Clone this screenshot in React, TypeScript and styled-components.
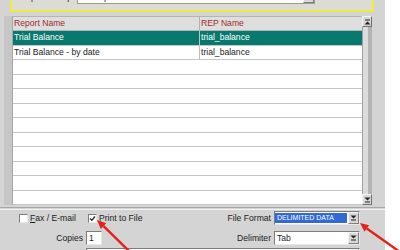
import React from 'react';
import styled, { createGlobalStyle } from 'styled-components';

const GlobalStyle = createGlobalStyle`
  html, body {
    margin: 0;
    padding: 0;
    background: #ffffff;
  }
  body {
    font-family: 'Liberation Sans', Arial, sans-serif;
    font-size: 8.6px;
    color: #1c1c1c;
  }
`;

const rows = [
  { name: 'Trial Balance', rep: 'trial_balance', selected: true },
  { name: 'Trial Balance - by date', rep: 'trial_balance', selected: false },
];
const EMPTY_ROWS = 10;

const DownGlyph: React.FC = () => (
  <svg width="7" height="6" viewBox="0 0 7 6">
    <path d="M0.5 0.5 H6.5 L3.5 3.5 Z" fill="#222" />
    <rect x="1" y="4.5" width="5" height="1" fill="#222" />
  </svg>
);

const UpGlyph: React.FC = () => (
  <svg width="7" height="6" viewBox="0 0 7 6">
    <rect x="1" y="0.5" width="5" height="1" fill="#222" />
    <path d="M0.5 5.5 H6.5 L3.5 2.5 Z" fill="#222" />
  </svg>
);

const CheckMark: React.FC = () => (
  <svg width="7" height="7" viewBox="0 0 7 7">
    <path d="M1 3.5 L2.8 5.3 L6 1.5" stroke="#222" strokeWidth="1.3" fill="none" />
  </svg>
);

const App: React.FC = () => {
  return (
    <Page>
      <GlobalStyle />
      <Window>
        <GroupBox>
          <GroupLabel>Report Group</GroupLabel>
          <GroupInput>
            <span>All Reports</span>
            <SmallButton>
              <DownGlyph />
            </SmallButton>
          </GroupInput>
        </GroupBox>

        <GridArea>
          <Gutter />
          <Table>
            <HeaderRow>
              <HeadCell $divider>Report Name</HeadCell>
              <HeadCell>REP Name</HeadCell>
            </HeaderRow>
            {rows.map((r) => (
              <Row key={r.name} $selected={r.selected}>
                <Cell $divider>{r.name}</Cell>
                <Cell>{r.rep}</Cell>
              </Row>
            ))}
            {Array.from({ length: EMPTY_ROWS }).map((_, i) => (
              <Row key={i} />
            ))}
          </Table>
          <ScrollBar>
            <ScrollButton>
              <UpGlyph />
            </ScrollButton>
            <Track />
            <ScrollButton>
              <DownGlyph />
            </ScrollButton>
          </ScrollBar>
        </GridArea>

        <Separator />

        <Options>
          <OptionRow>
            <CheckGroup $width={69}>
              <CheckBox />
              <CheckText>
                <u>F</u>ax / E-mail
              </CheckText>
            </CheckGroup>
            <CheckGroup>
              <CheckBox>
                <CheckMark />
              </CheckBox>
              <CheckText>Print to File</CheckText>
            </CheckGroup>
            <Field>
              <FieldLabel>File Format</FieldLabel>
              <Select>
                <SelectValue $highlight>DELIMITED DATA</SelectValue>
                <SmallButton>
                  <DownGlyph />
                </SmallButton>
              </Select>
            </Field>
          </OptionRow>

          <OptionRow $gap={6}>
            <CopiesLabel>Copies</CopiesLabel>
            <CopiesInput>1</CopiesInput>
            <Field>
              <FieldLabel>Delimiter</FieldLabel>
              <Select>
                <SelectValue>Tab</SelectValue>
                <SmallButton>
                  <DownGlyph />
                </SmallButton>
              </Select>
            </Field>
          </OptionRow>

          <OptionRow $gap={3}>
            <WideInput>
              <SmallButton />
            </WideInput>
          </OptionRow>
        </Options>
      </Window>

      <Arrows width="400" height="250" viewBox="0 0 400 250">
        <line x1="131" y1="253" x2="103.6" y2="226.2" stroke="#e2231a" strokeWidth="2.4" />
        <polygon points="97,220 106.3,223.2 100.8,229.1" fill="#e2231a" />
        <line x1="400" y1="252" x2="366.8" y2="228.5" stroke="#e2231a" strokeWidth="2.4" />
        <polygon points="360,223 369.1,225.2 364.5,231.7" fill="#e2231a" />
      </Arrows>
    </Page>
  );
};

export default App;

// Styles
const Page = styled.div`
  position: relative;
  width: 400px;
  height: 250px;
  overflow: hidden;
  background: #ffffff;
`;

const Window = styled.div`
  width: 385px;
  height: 250px;
  overflow: hidden;
  background: #d4d4d4;
  display: flex;
  flex-direction: column;

  & > * {
    flex-shrink: 0;
  }
`;

const GroupBox = styled.div`
  box-sizing: border-box;
  height: 26px;
  margin: -14px 11px 0 10px;
  border: 2px solid #ecec3c;
  background: #dcdcd4;
  display: flex;
  align-items: flex-start;
  padding: 2px 0 0 8px;
`;

const GroupLabel = styled.div`
  width: 57px;
  line-height: 14px;
`;

const GroupInput = styled.div`
  box-sizing: border-box;
  width: 238px;
  height: 14px;
  background: #fffff2;
  border: 1px solid #9a9a9a;
  display: flex;
  align-items: center;
  justify-content: space-between;
  padding-left: 3px;
`;

const SmallButton = styled.div`
  box-sizing: border-box;
  width: 11px;
  height: 100%;
  background: #d8d8d8;
  border: 1px solid;
  border-color: #f4f4f4 #808080 #808080 #f4f4f4;
  display: flex;
  align-items: center;
  justify-content: center;
  flex-shrink: 0;
`;

const GridArea = styled.div`
  display: flex;
  margin-top: 4px;
  height: 189px;
`;

const Gutter = styled.div`
  width: 8px;
  margin-left: 4px;
  background: #c6c6c6;
`;

const Table = styled.div`
  box-sizing: border-box;
  width: 350px;
  background: #ffffff;
  border-left: 1px solid #a6a6a6;
  border-top: 1px solid #b4b4b4;
  border-bottom: 1px solid #a6a6a6;
  display: flex;
  flex-direction: column;

  & > * {
    flex-shrink: 0;
  }
`;

const HeaderRow = styled.div`
  box-sizing: border-box;
  height: 14px;
  display: flex;
  background: #dedede;
  border-bottom: 1px solid #b4b4b4;
`;

const HeadCell = styled.div<{ $divider?: boolean }>`
  box-sizing: border-box;
  width: ${(p) => (p.$divider ? '187px' : 'auto')};
  flex: ${(p) => (p.$divider ? 'none' : '1')};
  padding-left: 1px;
  line-height: 13px;
  color: #9c2c2c;
  border-right: ${(p) => (p.$divider ? '1px solid #b0b0b0' : 'none')};
`;

const Row = styled.div<{ $selected?: boolean }>`
  box-sizing: border-box;
  height: 14.5px;
  display: flex;
  background: ${(p) => (p.$selected ? '#07796f' : '#ffffff')};
  color: ${(p) => (p.$selected ? '#ffffff' : '#1c1c1c')};
  border-bottom: 1px solid #c6c6c6;
`;

const Cell = styled.div<{ $divider?: boolean }>`
  box-sizing: border-box;
  width: ${(p) => (p.$divider ? '187px' : 'auto')};
  flex: ${(p) => (p.$divider ? 'none' : '1')};
  padding-left: 1px;
  line-height: 13.5px;
  border-right: ${(p) => (p.$divider ? '1px solid #c0c0c0' : 'none')};
`;

const ScrollBar = styled.div`
  width: 10px;
  display: flex;
  flex-direction: column;
  background: #c8c8c8;
`;

const ScrollButton = styled.div`
  box-sizing: border-box;
  height: 11px;
  flex-shrink: 0;
  background: #d8d8d8;
  border: 1px solid;
  border-color: #f4f4f4 #707070 #707070 #f4f4f4;
  display: flex;
  align-items: center;
  justify-content: center;
`;

const Track = styled.div`
  flex: 1;
  box-sizing: border-box;
  background: #dcdcdc;
  border-left: 1px solid #a0a0a0;
  border-right: 4px solid #b4b4b4;
`;

const Separator = styled.div`
  margin-top: 2px;
  height: 1px;
  border-top: 1px solid #a8a8a8;
  border-bottom: 1px solid #f2f2f2;
`;

const Options = styled.div`
  display: flex;
  flex-direction: column;

  & > * {
    flex-shrink: 0;
  }
`;

const OptionRow = styled.div<{ $gap?: number }>`
  display: flex;
  align-items: center;
  height: 14px;
  margin-top: ${(p) => p.$gap ?? 1}px;
  padding-right: 25px;
`;

const CheckGroup = styled.div<{ $width?: number }>`
  display: flex;
  align-items: center;
  width: ${(p) => (p.$width ? `${p.$width}px` : 'auto')};
  &:first-child {
    margin-left: 19px;
  }
`;

const CheckBox = styled.div`
  box-sizing: border-box;
  width: 9px;
  height: 9px;
  background: #ffffff;
  border: 1px solid;
  border-color: #7c7c7c #e8e8e8 #e8e8e8 #7c7c7c;
  display: flex;
  align-items: center;
  justify-content: center;
`;

const CheckText = styled.span`
  margin-left: 2px;
  white-space: nowrap;
`;

const Field = styled.div`
  margin-left: auto;
  display: flex;
  align-items: center;
  height: 100%;
`;

const FieldLabel = styled.div`
  margin-right: 3px;
  white-space: nowrap;
`;

const Select = styled.div`
  box-sizing: border-box;
  width: 86px;
  height: 14px;
  background: #ffffff;
  border: 1px solid;
  border-color: #7c7c7c #e8e8e8 #e8e8e8 #7c7c7c;
  display: flex;
`;

const SelectValue = styled.div<{ $highlight?: boolean }>`
  flex: 1;
  margin: ${(p) => (p.$highlight ? '1px 1px 1px 0' : '0')};
  padding-left: 2px;
  background: ${(p) => (p.$highlight ? '#3269d6' : 'transparent')};
  color: ${(p) => (p.$highlight ? '#ffffff' : '#1c1c1c')};
  font-size: ${(p) => (p.$highlight ? '7px' : '8.6px')};
  line-height: ${(p) => (p.$highlight ? '10px' : '12px')};
  white-space: nowrap;
  overflow: hidden;
`;

const CopiesLabel = styled.div`
  width: 83px;
  text-align: right;
  margin-right: 3px;
`;

const CopiesInput = styled.div`
  box-sizing: border-box;
  width: 16px;
  height: 14px;
  background: #ffffff;
  border: 1px solid;
  border-color: #7c7c7c #e8e8e8 #e8e8e8 #7c7c7c;
  padding-left: 2px;
  line-height: 12px;
`;

const WideInput = styled.div`
  box-sizing: border-box;
  margin-left: 86px;
  width: 284px;
  height: 14px;
  background: #ffffff;
  border: 1px solid;
  border-color: #7c7c7c #e8e8e8 #e8e8e8 #7c7c7c;
  display: flex;
  justify-content: flex-end;
`;

const Arrows = styled.svg`
  position: absolute;
  left: 0;
  top: 0;
  pointer-events: none;
`;
